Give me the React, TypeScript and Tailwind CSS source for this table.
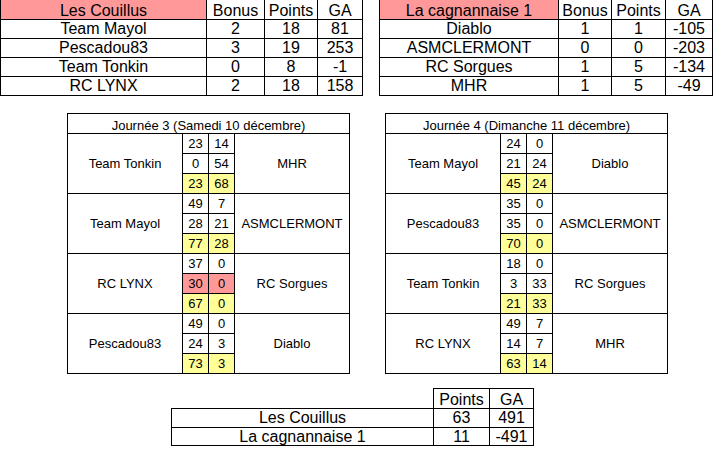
import React from "react";

const PINK = "bg-[#ff9999]";
const YELLOW = "bg-[#ffff99]";

type TopRow = [string, string, string, string];

function TopTable({
  header,
  rows,
  cols,
}: {
  header: TopRow;
  rows: TopRow[];
  cols: string;
}) {
  return (
    <div className={`grid ${cols} gap-px bg-black px-px pb-px text-[16px] text-black`}>
      {header.map((h, i) => (
        <div
          key={`h${i}`}
          className={`h-[19px] leading-[19px] pt-px text-center ${i === 0 ? PINK : "bg-white"}`}
        >
          {h}
        </div>
      ))}
      {rows.map((r, ri) =>
        r.map((c, ci) => (
          <div key={`${ri}-${ci}`} className="h-[18px] leading-[18px] text-center bg-white">
            {c}
          </div>
        ))
      )}
    </div>
  );
}

type Block = {
  home: string;
  away: string;
  scores: [number, number][];
  pinkRow?: number;
};

function DayTable({
  title,
  blocks,
  cols,
}: {
  title: string;
  blocks: Block[];
  cols: string;
}) {
  return (
    <div className={`grid ${cols} auto-rows-[19px] gap-px bg-black p-px text-[13px] text-black`}>
      <div className="col-span-4 bg-white text-center leading-[19px] pt-[2px]">{title}</div>
      {blocks.map((b, bi) => (
        <React.Fragment key={bi}>
          <div className="col-start-1 row-span-3 bg-white flex items-center justify-center pt-px">
            {b.home}
          </div>
          {b.scores.map((s, si) => {
            const bg = si === 2 ? YELLOW : b.pinkRow === si ? PINK : "bg-white";
            return (
              <React.Fragment key={si}>
                <div className={`col-start-2 ${bg} text-center leading-[19px]`}>{s[0]}</div>
                <div className={`col-start-3 ${bg} text-center leading-[19px]`}>{s[1]}</div>
                {si === 0 && (
                  <div className="col-start-4 row-span-3 bg-white flex items-center justify-center pt-px">
                    {b.away}
                  </div>
                )}
              </React.Fragment>
            );
          })}
        </React.Fragment>
      ))}
    </div>
  );
}

export default function App() {
  const leftRows: TopRow[] = [
    ["Team Mayol", "2", "18", "81"],
    ["Pescadou83", "3", "19", "253"],
    ["Team Tonkin", "0", "8", "-1"],
    ["RC LYNX", "2", "18", "158"],
  ];
  const rightRows: TopRow[] = [
    ["Diablo", "1", "1", "-105"],
    ["ASMCLERMONT", "0", "0", "-203"],
    ["RC Sorgues", "1", "5", "-134"],
    ["MHR", "1", "5", "-49"],
  ];
  const day3: Block[] = [
    { home: "Team Tonkin", away: "MHR", scores: [[23, 14], [0, 54], [23, 68]] },
    { home: "Team Mayol", away: "ASMCLERMONT", scores: [[49, 7], [28, 21], [77, 28]] },
    { home: "RC LYNX", away: "RC Sorgues", scores: [[37, 0], [30, 0], [67, 0]], pinkRow: 1 },
    { home: "Pescadou83", away: "Diablo", scores: [[49, 0], [24, 3], [73, 3]] },
  ];
  const day4: Block[] = [
    { home: "Team Mayol", away: "Diablo", scores: [[24, 0], [21, 24], [45, 24]] },
    { home: "Pescadou83", away: "ASMCLERMONT", scores: [[35, 0], [35, 0], [70, 0]] },
    { home: "Team Tonkin", away: "RC Sorgues", scores: [[18, 0], [3, 33], [21, 33]] },
    { home: "RC LYNX", away: "MHR", scores: [[49, 7], [14, 7], [63, 14]] },
  ];

  return (
    <div
      className="w-[722px] h-[469px] bg-white overflow-hidden text-black"
      style={{ fontFamily: '"Liberation Sans", Arial, sans-serif' }}
    >
      <div className="flex items-start gap-[16px]">
        <TopTable
          header={["Les Couillus", "Bonus", "Points", "GA"]}
          rows={leftRows}
          cols="grid-cols-[205px_57px_52px_44px]"
        />
        <TopTable
          header={["La cagnannaise 1", "Bonus", "Points", "GA"]}
          rows={rightRows}
          cols="grid-cols-[178px_52px_53px_46px]"
        />
      </div>

      <div className="mt-[17px] flex items-start pl-[67px] gap-[35px]">
        <DayTable
          title="Journée 3 (Samedi 10 décembre)"
          blocks={day3}
          cols="grid-cols-[114px_25px_25px_114px]"
        />
        <DayTable
          title="Journée 4 (Dimanche 11 décembre)"
          blocks={day4}
          cols="grid-cols-[114px_25px_25px_114px]"
        />
      </div>

      <div className="mt-[14px] ml-[171px] flex flex-col items-start text-[16px]">
        <div className="ml-[262px] grid grid-cols-[55px_43px] gap-px bg-black px-px pt-px">
          <div className="h-[19px] leading-[19px] pt-px bg-white text-center">Points</div>
          <div className="h-[19px] leading-[19px] pt-px bg-white text-center">GA</div>
        </div>
        <div className="grid grid-cols-[261px_55px_43px] grid-rows-[18px_17px] gap-px bg-black p-px">
          <div className="bg-white text-center leading-[18px]">Les Couillus</div>
          <div className="bg-white text-center leading-[18px]">63</div>
          <div className="bg-white text-center leading-[18px]">491</div>
          <div className="bg-white text-center leading-[18px]">La cagnannaise 1</div>
          <div className="bg-white text-center leading-[18px]">11</div>
          <div className="bg-white text-center leading-[18px]">-491</div>
        </div>
      </div>
    </div>
  );
}
